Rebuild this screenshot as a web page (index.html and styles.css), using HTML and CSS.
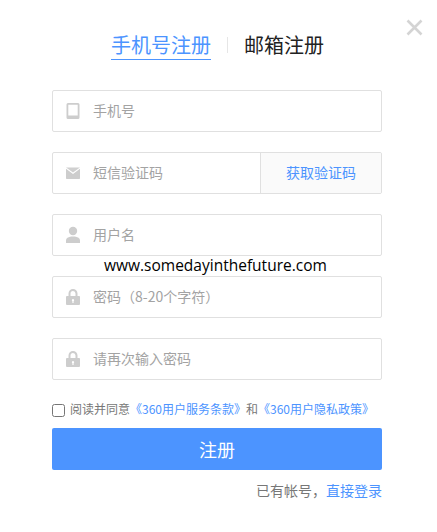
FILE: index.html
```html
<!DOCTYPE html>
<html lang="zh-CN">
<head>
<meta charset="utf-8">
<title>注册</title>
<link rel="stylesheet" href="styles.css">
</head>
<body>
<main class="dialog">
  <button class="close" aria-label="关闭">
    <svg width="17" height="17" viewBox="0 0 17 17"><path d="M1.5 1.5l14 14M15.5 1.5l-14 14" stroke="#d4d4d4" stroke-width="2.6" fill="none"/></svg>
  </button>
  <nav class="tabs">
    <a class="tab active">手机号注册</a>
    <span class="divider"></span>
    <a class="tab">邮箱注册</a>
  </nav>
  <form class="form">
    <div class="field">
      <svg class="icon" viewBox="0 0 14 18"><path fill-rule="evenodd" d="M2 1h10a1.500 1.500 0 0 1 1.500 1.500v13A1.500 1.500 0 0 1 12 17H2a1.500 1.500 0 0 1-1.500-1.500v-13A1.500 1.500 0 0 1 2 1zm.3 1.800v10.700h9.400V2.800z" fill="#cdcdcd"/></svg>
      <span class="ph">手机号</span>
    </div>
    <div class="field">
      <svg class="icon" viewBox="0 0 14 18"><path d="M0 3.500h14L7 8.500z" fill="#d0d0d0"/><path d="M0 4.800v9.500a.7.700 0 0 0 .7.700h12.600a.7.700 0 0 0 .7-.7V4.800L7 10z" fill="#cdcdcd"/></svg>
      <span class="ph">短信验证码</span>
      <a class="code">获取验证码</a>
    </div>
    <div class="field">
      <svg class="icon" viewBox="0 0 14 18"><circle cx="7" cy="5" r="4.200" fill="#cdcdcd"/><path d="M0 17v-2.500c0-2.400 2.500-4 7-4s7 1.600 7 4V17z" fill="#cdcdcd"/></svg>
      <span class="ph">用户名</span>
    </div>
    <div class="field">
      <svg class="icon" viewBox="0 0 14 18"><path fill-rule="evenodd" d="M2.500 8V5.500a4.500 4.500 0 0 1 9 0V8h1.300a1 1 0 0 1 1.200 1v7a1 1 0 0 1-1 1H1a1 1 0 0 1-1-1V9a1 1 0 0 1 1-1zm2 0h5V5.500a2.500 2.500 0 0 0-5 0zM7 11a1.200 1.200 0 0 0-.6 2.200V15h1.200v-1.800A1.200 1.200 0 0 0 7 11z" fill="#cdcdcd"/></svg>
      <span class="ph">密码（8-20个字符）</span>
    </div>
    <div class="field">
      <svg class="icon" viewBox="0 0 14 18"><path fill-rule="evenodd" d="M2.500 8V5.500a4.500 4.500 0 0 1 9 0V8h1.300a1 1 0 0 1 1.200 1v7a1 1 0 0 1-1 1H1a1 1 0 0 1-1-1V9a1 1 0 0 1 1-1zm2 0h5V5.500a2.500 2.500 0 0 0-5 0zM7 11a1.200 1.200 0 0 0-.6 2.200V15h1.200v-1.800A1.200 1.200 0 0 0 7 11z" fill="#cdcdcd"/></svg>
      <span class="ph">请再次输入密码</span>
    </div>
    <label class="agree">
      <input type="checkbox" class="check">
      <span class="label">阅读并同意</span><a class="link">《360用户服务条款》</a><span class="label">和</span><a class="link">《360用户隐私政策》</a>
    </label>
    <button type="button" class="submit">注册</button>
    <p class="login">已有帐号，<a class="link">直接登录</a></p>
  </form>
  <div class="watermark">www.somedayinthefuture.com</div>
</main>
</body>
</html>
```
FILE: styles.css
```css
* { box-sizing: border-box; }
html, body { margin: 0; padding: 0; background: #fff; }
body {
  width: 437px;
  height: 532px;
  overflow: hidden;
  font-family: "Noto Sans CJK SC", "Liberation Sans", sans-serif;
}
.dialog { position: relative; width: 437px; height: 532px; padding: 30px 55px 0 52px; }
.close {
  position: absolute; top: 19px; right: 14px;
  width: 17px; height: 17px; padding: 0; border: 0; background: none; display: block;
}
.close svg { display: block; }
.tabs { display: flex; align-items: flex-start; height: 30px; margin-left: 59px; }
.tab { font-size: 20px; line-height: 30px; color: #222; height: 30px; white-space: nowrap; }
.tab.active { color: #4c94ff; border-bottom: 1px solid #4c94ff; }
.divider { width: 1px; height: 16px; background: #e6e6e6; margin: 7px 16px 0; }
.form { margin-top: 30px; }
.field {
  display: flex; align-items: center; height: 42px; margin-bottom: 20px;
  border: 1px solid #e0e0e0; border-radius: 2px; padding-left: 13px; overflow: hidden;
}
.icon { width: 14px; height: 18px; flex: none; margin-right: 13px; }
.ph { flex: 1; font-size: 14px; color: #a3a3a3; line-height: 20px; padding-bottom: 2px; }
.code {
  flex: none; width: 121px; height: 40px; line-height: 38px; text-align: center;
  font-size: 14px; color: #4c94ff; background: #fafafa; border-left: 1px solid #e0e0e0;
}
.agree {
  display: flex; align-items: center; height: 20px; margin-top: 20px;
  font-size: 12px; color: #777; white-space: nowrap;
}
.agree .label, .agree .link { line-height: 18px; padding-bottom: 2px; }
.check { width: 13px; height: 13px; margin: 0 5px 0 0; flex: none; }
.link { color: #4c94ff; }
.submit {
  display: block; width: 330px; height: 42px; margin-top: 8px; padding: 0; border: 0; border-radius: 2px;
  background: #4c94ff; color: #fff; font: 18px/42px "Noto Sans CJK SC", sans-serif;
}
.login { margin: 10px 0 0; font-size: 14px; line-height: 20px; color: #777; text-align: right; }
.watermark {
  position: absolute; left: 104px; top: 255px;
  font: 15.5px/20px "Open Sans", sans-serif; color: #000; white-space: nowrap;
}
```
